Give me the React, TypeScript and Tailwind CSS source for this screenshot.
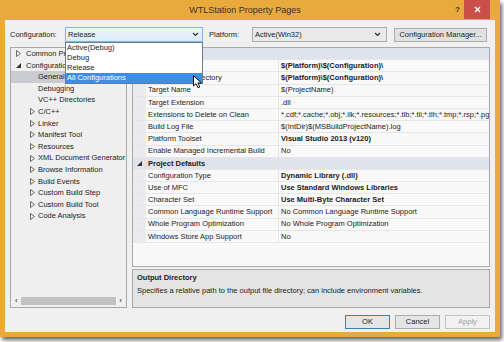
import React from "react";

interface TreeItem {
    t: string;
    lvl: 0 | 1;
    arrow?: "closed" | "open";
    sel?: boolean;
}

interface GridRow {
    cat?: string;
    n?: string;
    v?: string;
    b?: boolean;
}

const tree: TreeItem[] = [
    { t: "Common Properties", lvl: 0, arrow: "closed" },
    { t: "Configuration Properties", lvl: 0, arrow: "open" },
    { t: "General", lvl: 1, sel: true },
    { t: "Debugging", lvl: 1 },
    { t: "VC++ Directories", lvl: 1 },
    { t: "C/C++", lvl: 1, arrow: "closed" },
    { t: "Linker", lvl: 1, arrow: "closed" },
    { t: "Manifest Tool", lvl: 1, arrow: "closed" },
    { t: "Resources", lvl: 1, arrow: "closed" },
    { t: "XML Document Generator", lvl: 1, arrow: "closed" },
    { t: "Browse Information", lvl: 1, arrow: "closed" },
    { t: "Build Events", lvl: 1, arrow: "closed" },
    { t: "Custom Build Step", lvl: 1, arrow: "closed" },
    { t: "Custom Build Tool", lvl: 1, arrow: "closed" },
    { t: "Code Analysis", lvl: 1, arrow: "closed" },
];

const rows: GridRow[] = [
    { cat: "General" },
    { n: "Output Directory", v: "$(Platform)\\$(Configuration)\\", b: true },
    { n: "Intermediate Directory", v: "$(Platform)\\$(Configuration)\\", b: true },
    { n: "Target Name", v: "$(ProjectName)" },
    { n: "Target Extension", v: ".dll" },
    { n: "Extensions to Delete on Clean", v: "*.cdf;*.cache;*.obj;*.ilk;*.resources;*.tlb;*.tli;*.tlh;*.tmp;*.rsp;*.pgc;*.pgd;*.meta" },
    { n: "Build Log File", v: "$(IntDir)$(MSBuildProjectName).log" },
    { n: "Platform Toolset", v: "Visual Studio 2013 (v120)", b: true },
    { n: "Enable Managed Incremental Build", v: "No" },
    { cat: "Project Defaults" },
    { n: "Configuration Type", v: "Dynamic Library (.dll)", b: true },
    { n: "Use of MFC", v: "Use Standard Windows Libraries", b: true },
    { n: "Character Set", v: "Use Multi-Byte Character Set", b: true },
    { n: "Common Language Runtime Support", v: "No Common Language Runtime Support" },
    { n: "Whole Program Optimization", v: "No Whole Program Optimization" },
    { n: "Windows Store App Support", v: "No" },
];

function Closed() {
    return (
        <svg width="5" height="7" viewBox="0 0 5 7">
            <path d="M0.5 0.5 L4.5 3.5 L0.5 6.5 Z" fill="none" stroke="#6b6b6b" strokeWidth="1" />
        </svg>
    );
}

function Open() {
    return (
        <svg width="5" height="5" viewBox="0 0 5 5">
            <path d="M5 0 L5 5 L0 5 Z" fill="#333" />
        </svg>
    );
}

function Chevron() {
    return (
        <svg width="7" height="5" viewBox="0 0 7 5">
            <path d="M1 1 L3.5 3.5 L6 1" fill="none" stroke="#333" strokeWidth="1.2" />
        </svg>
    );
}

export default function App() {
    return (
        <div className="w-[504px] h-[342px] bg-white overflow-hidden font-['Liberation_Sans',Arial,sans-serif] text-[7.5px] text-[#1b1b1b] leading-none">
            <div className="w-[500px] h-[337px] bg-[#e9a93c] shadow-[2px_3px_4px_rgba(0,0,0,0.6)] flex flex-col px-[5px] pb-[5px]">
                {/* title bar */}
                <div className="h-[20px] flex items-center -mx-[5px]">
                    <div className="flex-1" />
                    <div className="text-[9px] text-[#3a3326]">WTLStation Property Pages</div>
                    <div className="flex-1 flex justify-end items-start h-full pr-[10px]">
                        <div className="h-[19px] flex items-center text-[8px] font-bold text-[#3a3326] mr-[4px]">?</div>
                        <div className="w-[26px] h-[19px] bg-[#c9504a] flex items-center justify-center">
                            <svg width="7" height="7" viewBox="0 0 7 7">
                                <path d="M1 1 L6 6 M6 1 L1 6" stroke="#fff" strokeWidth="1.3" />
                            </svg>
                        </div>
                    </div>
                </div>

                {/* client */}
                <div className="flex-1 bg-[#f0f0f0] relative flex flex-col pl-[5px] pr-[5px] pt-[7px]">
                    <div className="flex items-center h-[15px]">
                        <div className="w-[55px]">Configuration:</div>
                        <div className="w-[138px] h-[15px] border border-[#7eb4ea] bg-gradient-to-b from-[#ecf4fc] to-[#dcecfc] flex items-center justify-between pl-[2px] pr-[3px]">
                            <span>Release</span>
                            <Chevron />
                        </div>
                        <div className="w-[43px] ml-[6px]">Platform:</div>
                        <div className="w-[135px] h-[15px] border border-[#acacac] bg-[#e9e9e9] flex items-center justify-between pl-[2px] pr-[5px]">
                            <span>Active(Win32)</span>
                            <Chevron />
                        </div>
                        <div className="w-[93px] h-[14px] ml-[7px] border border-[#adadad] bg-[#e1e1e1] flex items-center justify-center">
                            Configuration Manager...
                        </div>
                    </div>

                    <div className="flex mt-[5px] h-[261px] gap-[5px]">
                        {/* tree */}
                        <div className="w-[117px] h-full border border-[#a9a9a9] bg-[#efefef] flex flex-col overflow-hidden">
                            <div className="flex-1 flex flex-col">
                                {tree.map((it) => (
                                    <div
                                        key={it.t}
                                        className={`h-[11.6px] flex items-center whitespace-nowrap ${it.sel ? "bg-[#cbcbd2]" : ""}`}
                                    >
                                        <div className={`flex items-center justify-center w-[6px] ${it.lvl === 0 ? "ml-[4px] mr-[5px]" : "ml-[18px] mr-[3px]"}`}>
                                            {it.arrow === "closed" && <Closed />}
                                            {it.arrow === "open" && <Open />}
                                        </div>
                                        <span>{it.t}</span>
                                    </div>
                                ))}
                            </div>
                            <div className="h-[10px] mb-[1px] flex items-center px-[4px] gap-[3px]">
                                <span className="text-[8px] font-bold text-[#555]">‹</span>
                                <div className="flex-1 h-[8px] bg-[#c2c2c2]" />
                                <span className="text-[8px] font-bold text-[#555]">›</span>
                            </div>
                        </div>

                        {/* grid + description */}
                        <div className="w-[358px] flex flex-col gap-[2px]">
                            <div className="h-[220px] border border-[#a9a9a9] bg-[#f9f9f9] flex flex-col overflow-hidden">
                                {rows.map((r, i) =>
                                    r.cat ? (
                                        <div key={i} className="h-[12.2px] shrink-0 bg-[#dfe3eb] flex items-center border-b border-[#e7e7ea]">
                                            <div className="w-[13px] flex justify-center">
                                                <Open />
                                            </div>
                                            <span className="font-bold ml-[2px]">{r.cat}</span>
                                        </div>
                                    ) : (
                                        <div key={i} className="h-[12.2px] shrink-0 flex items-center border-b border-[#e6e6e6] whitespace-nowrap">
                                            <div className="w-[13px] h-full bg-[#ebebee]" />
                                            <div className="w-[133px] h-full flex items-center pl-[2px] border-r border-[#e6e6e6] overflow-hidden">
                                                {r.n}
                                            </div>
                                            <div className={`flex-1 h-full flex items-center pl-[2px] overflow-hidden ${r.b ? "font-bold" : ""}`}>
                                                {r.v}
                                            </div>
                                        </div>
                                    )
                                )}
                            </div>
                            <div className="flex-1 border border-[#a9a9a9] bg-[#e4e4e4] px-[4px] pt-[4px] flex flex-col gap-[5px]">
                                <div className="font-bold">Output Directory</div>
                                <div>Specifies a relative path to the output file directory; can include environment variables.</div>
                            </div>
                        </div>
                    </div>

                    {/* buttons */}
                    <div className="flex justify-end mt-[7px] gap-[5px] pr-[-1px]">
                        <div className="w-[45px] h-[14px] border border-[#3c7fb1] bg-[#e5e5e5] flex items-center justify-center">OK</div>
                        <div className="w-[45px] h-[14px] border border-[#adadad] bg-[#e5e5e5] flex items-center justify-center">Cancel</div>
                        <div className="w-[45px] h-[14px] border border-[#c4c4c4] bg-[#f2f2f2] text-[#a3a3a3] flex items-center justify-center">Apply</div>
                    </div>

                    {/* dropdown list */}
                    <div className="absolute left-[60px] top-[22px] w-[138px] border border-[#6e7a8a] bg-white flex flex-col">
                        <div className="h-[10px] flex items-center pl-[1px]">Active(Debug)</div>
                        <div className="h-[10px] flex items-center pl-[1px]">Debug</div>
                        <div className="h-[10px] flex items-center pl-[1px]">Release</div>
                        <div className="h-[10px] flex items-center pl-[1px] bg-[#3d8ee6] text-white">All Configurations</div>
                    </div>

                    {/* mouse pointer */}
                    <svg className="absolute left-[188px] top-[55px]" width="10" height="14" viewBox="0 0 10 14">
                        <path d="M0.5 0.5 L0.5 11 L3 8.6 L5 12.8 L6.8 12 L4.9 7.9 L8.3 7.9 Z" fill="#fff" stroke="#111" strokeWidth="1" />
                    </svg>
                </div>
            </div>
        </div>
    );
}
